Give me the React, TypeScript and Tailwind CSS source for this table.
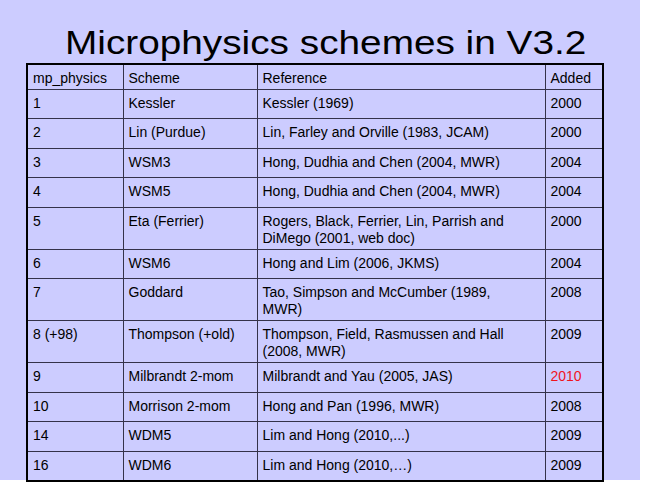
import * as React from 'react';

// Slide: WRF microphysics option table, lavender background.

interface Row {
  id: string;
  scheme: string;
  reference: React.ReactNode;
  added: string;
  tall?: boolean;
  highlight?: boolean;
}

const rows: Row[] = [
  { id: '1', scheme: 'Kessler', reference: 'Kessler (1969)', added: '2000' },
  { id: '2', scheme: 'Lin (Purdue)', reference: 'Lin, Farley and Orville (1983, JCAM)', added: '2000' },
  { id: '3', scheme: 'WSM3', reference: 'Hong, Dudhia and Chen (2004, MWR)', added: '2004' },
  { id: '4', scheme: 'WSM5', reference: 'Hong, Dudhia and Chen (2004, MWR)', added: '2004' },
  {
    id: '5',
    scheme: 'Eta (Ferrier)',
    reference: (
      <>
        Rogers, Black, Ferrier, Lin, Parrish and
        <br />
        DiMego (2001, web doc)
      </>
    ),
    added: '2000',
    tall: true,
  },
  { id: '6', scheme: 'WSM6', reference: 'Hong and Lim (2006, JKMS)', added: '2004' },
  {
    id: '7',
    scheme: 'Goddard',
    reference: (
      <>
        Tao, Simpson and McCumber (1989,
        <br />
        MWR)
      </>
    ),
    added: '2008',
    tall: true,
  },
  {
    id: '8 (+98)',
    scheme: 'Thompson (+old)',
    reference: (
      <>
        Thompson, Field, Rasmussen and Hall
        <br />
        (2008, MWR)
      </>
    ),
    added: '2009',
    tall: true,
  },
  { id: '9', scheme: 'Milbrandt 2-mom', reference: 'Milbrandt and Yau (2005, JAS)', added: '2010', highlight: true },
  { id: '10', scheme: 'Morrison 2-mom', reference: 'Hong and Pan (1996, MWR)', added: '2008' },
  { id: '14', scheme: 'WDM5', reference: 'Lim and Hong (2010,...)', added: '2009' },
  { id: '16', scheme: 'WDM6', reference: 'Lim and Hong (2010,…)', added: '2009' },
];

const cell = 'border border-[#34324a] px-[5px] pt-[5px] align-top';

export default function App() {
  return (
    <div className="h-[487px] w-[645px] bg-white font-['Liberation_Sans',Arial,sans-serif] text-black">
      <div className="h-[480px] w-[640px] bg-[#ccccff] pt-[25px]">
        <h1 className="ml-[65px] inline-block origin-left scale-x-[1.14] text-[34px] leading-[34px] font-normal whitespace-nowrap">
          Microphysics schemes in V3.2
        </h1>
        <table className="mt-[2px] ml-[26px] w-[578px] table-fixed border-collapse border-2 border-black text-[14px] leading-[17px]">
          <colgroup>
            <col className="w-[96px]" />
            <col className="w-[134px]" />
            <col className="w-[288px]" />
            <col className="w-[58px]" />
          </colgroup>
          <thead>
            <tr className="h-[25px]">
              <th className={`${cell} pt-[3px] text-left font-normal`}>mp_physics</th>
              <th className={`${cell} pt-[3px] text-left font-normal`}>Scheme</th>
              <th className={`${cell} pt-[3px] text-left font-normal`}>Reference</th>
              <th className={`${cell} pt-[3px] text-left font-normal`}>Added</th>
            </tr>
          </thead>
          <tbody>
            {rows.map((r) => (
              <tr key={r.id + r.scheme} className={r.tall ? 'h-[42px]' : 'h-[29.5px]'}>
                <td className={cell}>{r.id}</td>
                <td className={cell}>{r.scheme}</td>
                <td className={cell}>{r.reference}</td>
                <td className={`${cell} ${r.highlight ? 'text-[#f0141e]' : ''}`}>{r.added}</td>
              </tr>
            ))}
          </tbody>
        </table>
      </div>
    </div>
  );
}
